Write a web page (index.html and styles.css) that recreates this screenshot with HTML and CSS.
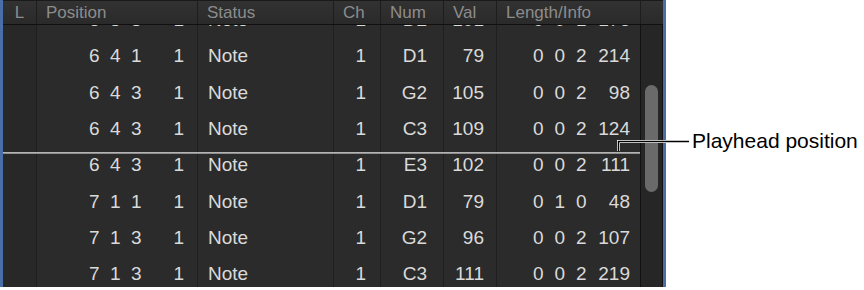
FILE: index.html
```html
<!DOCTYPE html>
<html lang="en">
<head>
  <meta charset="UTF-8" />
  <title>Event List</title>
  <link rel="stylesheet" href="styles.css">
</head>
<body>

  <div class="figure">
    <div class="panel">
      <div class="head">
        <div class="hcell center">L</div>
        <div class="hcell">Position</div>
        <div class="hcell">Status</div>
        <div class="hcell">Ch</div>
        <div class="hcell">Num</div>
        <div class="hcell">Val</div>
        <div class="hcell">Length/Info</div>
        <div class="hcell"></div>
      </div>

      <div class="body">
        <div class="list">
          <div class="row">
            <div class="cell lock"></div>
            <div class="cell pos"><span>6</span><span>3</span><span>3</span><span class="wide">1</span></div>
            <div class="cell status">Note</div>
            <div class="cell num">1</div>
            <div class="cell num">D2</div>
            <div class="cell num">101</div>
            <div class="cell len"><span>0</span><span>0</span><span>1</span><span class="wide">176</span></div>
          </div>
          <div class="row">
            <div class="cell lock"></div>
            <div class="cell pos"><span>6</span><span>4</span><span>1</span><span class="wide">1</span></div>
            <div class="cell status">Note</div>
            <div class="cell num">1</div>
            <div class="cell num">D1</div>
            <div class="cell num">79</div>
            <div class="cell len"><span>0</span><span>0</span><span>2</span><span class="wide">214</span></div>
          </div>
          <div class="row">
            <div class="cell lock"></div>
            <div class="cell pos"><span>6</span><span>4</span><span>3</span><span class="wide">1</span></div>
            <div class="cell status">Note</div>
            <div class="cell num">1</div>
            <div class="cell num">G2</div>
            <div class="cell num">105</div>
            <div class="cell len"><span>0</span><span>0</span><span>2</span><span class="wide">98</span></div>
          </div>
          <div class="row">
            <div class="cell lock"></div>
            <div class="cell pos"><span>6</span><span>4</span><span>3</span><span class="wide">1</span></div>
            <div class="cell status">Note</div>
            <div class="cell num">1</div>
            <div class="cell num">C3</div>
            <div class="cell num">109</div>
            <div class="cell len"><span>0</span><span>0</span><span>2</span><span class="wide">124</span></div>
          </div>
          <div class="row">
            <div class="cell lock"></div>
            <div class="cell pos"><span>6</span><span>4</span><span>3</span><span class="wide">1</span></div>
            <div class="cell status">Note</div>
            <div class="cell num">1</div>
            <div class="cell num">E3</div>
            <div class="cell num">102</div>
            <div class="cell len"><span>0</span><span>0</span><span>2</span><span class="wide">111</span></div>
          </div>
          <div class="row">
            <div class="cell lock"></div>
            <div class="cell pos"><span>7</span><span>1</span><span>1</span><span class="wide">1</span></div>
            <div class="cell status">Note</div>
            <div class="cell num">1</div>
            <div class="cell num">D1</div>
            <div class="cell num">79</div>
            <div class="cell len"><span>0</span><span>1</span><span>0</span><span class="wide">48</span></div>
          </div>
          <div class="row">
            <div class="cell lock"></div>
            <div class="cell pos"><span>7</span><span>1</span><span>3</span><span class="wide">1</span></div>
            <div class="cell status">Note</div>
            <div class="cell num">1</div>
            <div class="cell num">G2</div>
            <div class="cell num">96</div>
            <div class="cell len"><span>0</span><span>0</span><span>2</span><span class="wide">107</span></div>
          </div>
          <div class="row">
            <div class="cell lock"></div>
            <div class="cell pos"><span>7</span><span>1</span><span>3</span><span class="wide">1</span></div>
            <div class="cell status">Note</div>
            <div class="cell num">1</div>
            <div class="cell num">C3</div>
            <div class="cell num">111</div>
            <div class="cell len"><span>0</span><span>0</span><span>2</span><span class="wide">219</span></div>
          </div>
        </div>

        <div class="scroll">
          <div class="thumb"></div>
        </div>

        <!-- playhead -->
        <div class="playhead"></div>
      </div>
    </div>

    <!-- callout -->
    <svg class="callout-line" width="80" height="16" viewBox="0 0 80 16">
      <path d="M1.5 12 V2.5 H72" fill="none" stroke="#fff" stroke-width="3" />
      <path d="M1.5 12 V2.5 H72" fill="none" stroke="#000" stroke-width="1.5" />
    </svg>
    <div class="callout">Playhead position</div>
  </div>

</body>
</html>
```

FILE: styles.css
```css
* {
  box-sizing: border-box;
}

body {
  margin: 0;
  background: #fff;
  font-family: "Liberation Sans", Arial, sans-serif;
}

.figure {
  position: relative;
  width: 864px;
  height: 290px;
}

.panel {
  width: 666px;
  height: 287px;
  border-left: 3px solid #4a6ea6;
  border-right: 3px solid #4a6ea6;
  background: #2b2b2b;
  display: flex;
  flex-direction: column;
  overflow: hidden;
}

/* header */
.head {
  display: grid;
  grid-template-columns: 33px 161px 136px 47px 63px 53px 144px 23px;
  height: 25px;
  flex: none;
  background: linear-gradient(#323232, #2a2a2a);
  border-top: 1px solid #1a1a1a;
  border-bottom: 1px solid #101010;
  position: relative;
  z-index: 2;
}

.hcell {
  border-left: 1px solid #1d1d1d;
  color: #8c8c8c;
  font-size: 17px;
  line-height: 23px;
  padding-left: 9px;
  white-space: nowrap;
}

.hcell:first-child {
  border-left: none;
}

.hcell.center {
  padding-left: 0;
  text-align: center;
}

/* rows */
.body {
  flex: 1;
  display: flex;
  position: relative;
  overflow: hidden;
}

.list {
  width: 637px;
  margin-top: -23px;
}

.row {
  display: grid;
  grid-template-columns: 33px 161px 136px 47px 63px 53px 144px;
  height: 36.3px;
  color: #dadada;
  font-size: 19px;
}

.cell {
  border-left: 1px solid #1f1f1f;
  display: flex;
  align-items: center;
  white-space: nowrap;
}

.cell.lock {
  border-left: none;
  background: #282828;
}

.cell.status {
  padding-left: 10px;
}

.cell.num {
  justify-content: flex-end;
}

.row .num:nth-child(4) {
  padding-right: 14px;
}

.row .num:nth-child(5) {
  padding-right: 16px;
}

.row .num:nth-child(6) {
  padding-right: 12px;
}

.cell.pos,
.cell.len {
  justify-content: flex-end;
}

.cell.pos {
  padding-right: 13px;
}

.cell.len {
  padding-right: 10px;
}

.cell.pos span {
  width: 21px;
  text-align: right;
}

.cell.len span {
  width: 21.5px;
  text-align: right;
}

.cell.pos span.wide {
  width: 42.5px;
}

.cell.len span.wide {
  width: 43.5px;
}

/* scroller */
.scroll {
  width: 23px;
  flex: none;
  background: #262626;
  border-left: 1px solid #121212;
  border-right: 1px solid #121212;
  padding: 60px 4px 0;
}

.thumb {
  width: 13px;
  height: 107px;
  border-radius: 7px;
  background: #6a6a6a;
}

.playhead {
  position: absolute;
  left: 0;
  top: 127px;
  width: 637px;
  height: 2px;
  background: #8e8e8e;
  border-top: 1px solid #b4b4b4;
}

/* annotation */
.callout-line {
  position: absolute;
  left: 617px;
  top: 139px;
}

.callout {
  position: absolute;
  left: 692px;
  top: 129px;
  font-size: 21px;
  line-height: 24px;
  color: #000;
  white-space: nowrap;
}
```
